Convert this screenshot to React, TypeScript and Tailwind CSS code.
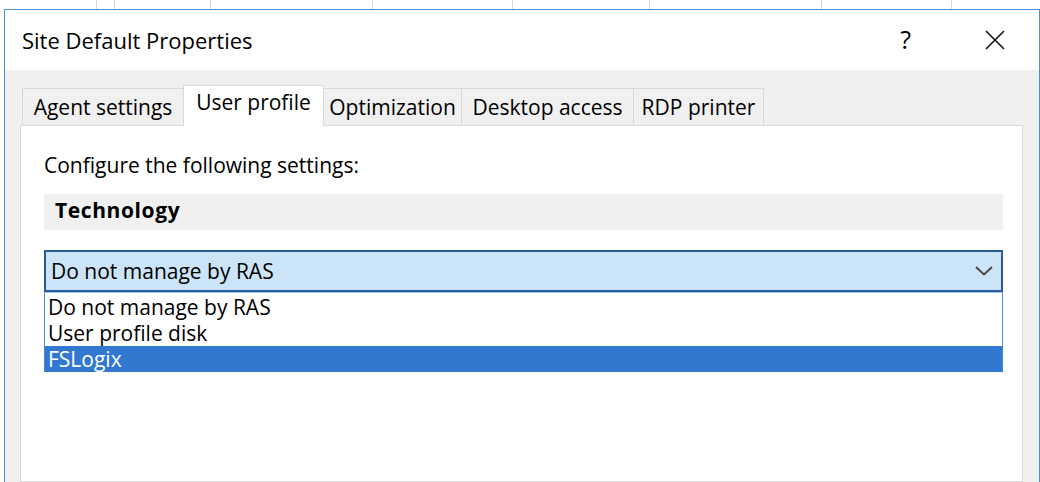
import React from 'react';

const tabs = [
    { label: 'Agent settings', w: 'w-[162px]' },
    { label: 'User profile', w: 'w-[141px]', active: true },
    { label: 'Optimization', w: 'w-[139px]' },
    { label: 'Desktop access', w: 'w-[173px]' },
    { label: 'RDP printer', w: 'w-[131px]' },
];

const options = ['Do not manage by RAS', 'User profile disk', 'FSLogix'];

// columns of the grid that peeks out above the dialog
const bgCols = ['w-[97px]', 'w-[18px]', 'w-[96px]', 'w-[162px]', 'w-[140px]', 'w-[137px]', 'w-[172px]', 'w-[130px]', 'flex-1'];

const CloseIcon = () => (
    <svg width="22" height="20" viewBox="0 0 22 20" fill="none">
        <path d="M2 1 L20 19 M20 1 L2 19" stroke="#111" strokeWidth="1.6" />
    </svg>
);

const Chevron = () => (
    <svg width="18" height="10" viewBox="0 0 18 10" fill="none">
        <path d="M1 1 L9 8.5 L17 1" stroke="#444" strokeWidth="1.8" />
    </svg>
);

export default function App() {
    return (
        <div className="w-[1040px] h-[482px] overflow-hidden bg-white font-['Open_Sans','Noto_Sans',sans-serif] text-black">
            <div className="h-[9px] flex">
                {bgCols.map((c, i) => (
                    <div key={i} className={`${c} h-full border-r border-[#d6d6d6] last:border-r-0`} />
                ))}
            </div>

            <div className="ml-[4px] h-[473px] border-l border-t border-r border-[#4b90da] flex flex-col">
                {/* title bar */}
                <div className="h-[60px] bg-white flex items-center pl-[17px] pr-[33px]">
                    <span className="text-[22px] leading-[26px]">Site Default Properties</span>
                    <span className="ml-auto text-[25px] leading-[28px] mr-[73px] -mt-[2px]">?</span>
                    <CloseIcon />
                </div>

                {/* body */}
                <div className="flex-1 bg-[#f0f0f0] pl-[15px] pr-[16px] pt-[15px] flex flex-col">
                    <div className="flex items-end pl-[2px] -mb-px relative z-10">
                        {tabs.map((t, i) =>
                            t.active ? (
                                <div
                                    key={t.label}
                                    className={`${t.w} h-[41px] bg-white border-l border-t border-r border-[#d9d9d9] flex justify-center pt-[4px] -ml-px`}
                                >
                                    <span className="text-[21px] leading-[24px]">{t.label}</span>
                                </div>
                            ) : (
                                <div
                                    key={t.label}
                                    className={`${t.w} h-[37px] mb-px bg-[#f0f0f0] border-l border-t border-r border-[#d9d9d9] flex justify-center pt-[6px] ${i > 0 ? '-ml-px' : ''}`}
                                >
                                    <span className="text-[21px] leading-[24px]">{t.label}</span>
                                </div>
                            )
                        )}
                    </div>

                    <div className="flex-1 bg-white border border-[#d9d9d9] pl-[23px] pr-[19px] pt-[27px]">
                        <div className="text-[21px] leading-[24px]">Configure the following settings:</div>

                        <div className="mt-[17px] h-[36px] bg-[#f0f0f0] pl-[11px] pt-[4px]">
                            <span className="text-[21px] leading-[24px] font-bold tracking-[0.6px]">Technology</span>
                        </div>

                        <div className="mt-[20px]">
                            <div className="h-[42px] bg-[#cce4f7] border-2 border-[#2a5a9c] flex items-center pl-[5px] pr-[8px]">
                                <span className="text-[21px] leading-[24px]">Do not manage by RAS</span>
                                <span className="ml-auto">
                                    <Chevron />
                                </span>
                            </div>
                            <div className="bg-white border-x border-t border-[#3d8ee6] border-t-[#9cc7f0] pt-[1px]">
                                {options.map((o, i) => (
                                    <div
                                        key={o}
                                        className={`h-[26px] pl-[3px] text-[21px] leading-[26px] ${
                                            i === 2 ? 'bg-[#3278d0] text-white' : ''
                                        }`}
                                    >
                                        {o}
                                    </div>
                                ))}
                            </div>
                        </div>
                    </div>
                </div>
            </div>
        </div>
    );
}
